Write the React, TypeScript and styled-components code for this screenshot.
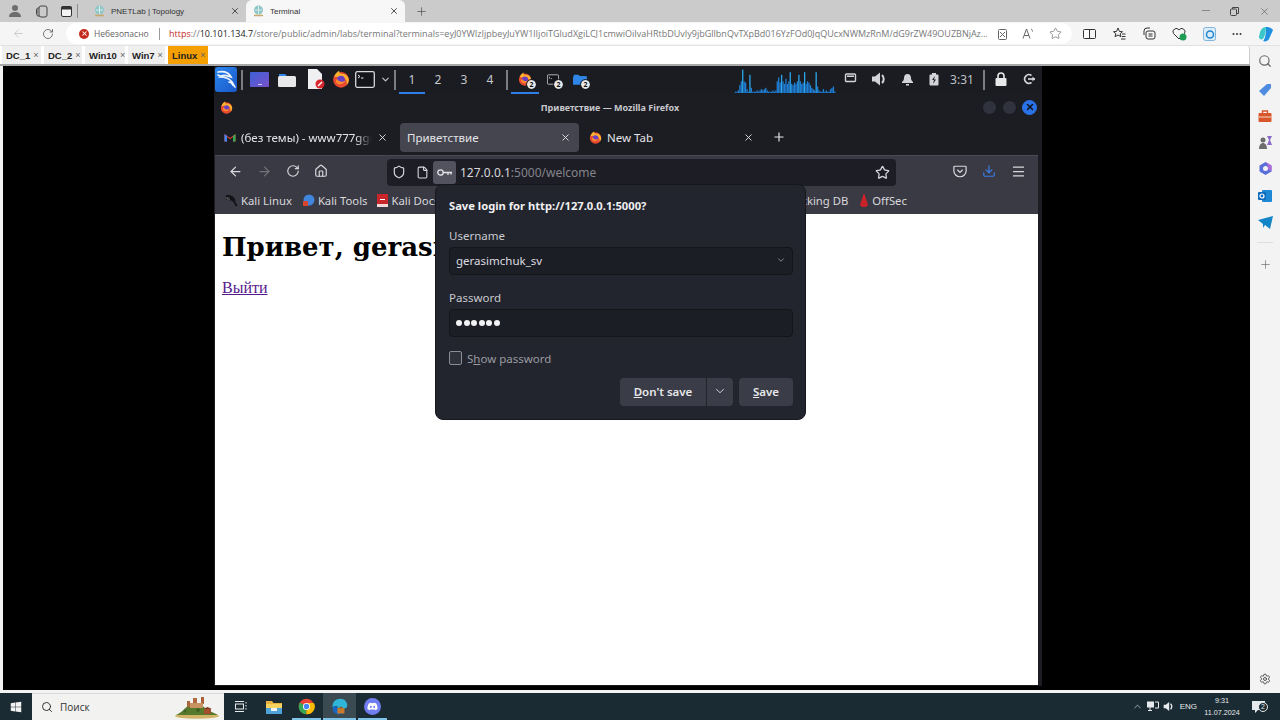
import React from "react";
import styled, { createGlobalStyle } from "styled-components";
import {
  ArrowLeft,
  ArrowRight,
  ChevronDown,
  ChevronUp,
  Download,
  File,
  Home,
  Menu,
  Plus,
  RotateCw,
  Search,
  Settings,
  Shield,
  Star,
  X,
} from "lucide-react";
import { FaDiscord, FaWindows } from "react-icons/fa";

const GlobalStyle = createGlobalStyle`
  html, body {
    margin: 0;
    padding: 0;
    width: 1280px;
    height: 720px;
    overflow: hidden;
    background: #f3f3f3;
  }
  * { box-sizing: border-box; }
`;

const Page = styled.div`
  width: 1280px;
  height: 720px;
  display: flex;
  flex-direction: column;
  overflow: hidden;
  font-family: "Open Sans", "Liberation Sans", sans-serif;
`;

/* edge chrome */

const EdgeTabBar = styled.div`
  height: 22px;
  background: #cbcbcb;
  display: flex;
  align-items: flex-end;
  color: #444;
`;

const EdgeLead = styled.div`
  width: 87px;
  height: 22px;
  display: flex;
  align-items: center;
  padding-left: 8px;
  gap: 13px;
  flex: none;
`;

const EdgeDivider = styled.div`
  width: 1px;
  height: 14px;
  background: #8c8c8c;
  margin-left: -8px;
`;

const EdgeTab = styled.div<{ $active?: boolean }>`
  width: 159px;
  height: 22px;
  display: flex;
  align-items: center;
  padding: 0 6px 0 7px;
  font: 8px "Liberation Sans", sans-serif;
  gap: 6px;
  color: #333;
  background: ${(p) => (p.$active ? "#f7f7f7" : "transparent")};
  border-radius: 6px 6px 0 0;
`;

const TabLabel = styled.span`
  flex: 1;
`;

const NewEdgeTab = styled.div`
  width: 32px;
  height: 22px;
  display: flex;
  align-items: center;
  justify-content: center;
`;

const WindowButtons = styled.div`
  margin-left: auto;
  height: 22px;
  display: flex;
  align-items: center;
  gap: 20px;
  padding-right: 10px;
`;

const EdgeAddressBar = styled.div`
  height: 24px;
  flex: none;
  background: #f5f5f5;
  display: flex;
  align-items: center;
  border-bottom: 1px solid #e2e2e2;
  color: #555;
`;

const NavButtons = styled.div`
  width: 66px;
  display: flex;
  align-items: center;
  padding-left: 12px;
  gap: 17px;
  flex: none;
`;

const AddressPill = styled.div`
  width: 1006px;
  height: 21px;
  background: #fff;
  border-radius: 11px;
  display: flex;
  align-items: center;
  padding-left: 13px;
  font-size: 8.5px;
  flex: none;
`;

const InsecureBadge = styled.span`
  width: 10px;
  height: 10px;
  border-radius: 50%;
  background: #c42b1c;
  color: #fff;
  display: flex;
  align-items: center;
  justify-content: center;
  flex: none;
`;

const InsecureText = styled.span`
  color: #666;
  margin-left: 5px;
  width: 65px;
`;

const UrlDivider = styled.span`
  width: 1px;
  height: 12px;
  background: #999;
  margin-right: 9px;
`;

const UrlScheme = styled.span`
  color: #c42b1c;
`;

const UrlHost = styled.span`
  color: #222;
`;

const UrlRest = styled.span`
  color: #777;
  width: 818px;
  overflow: hidden;
  white-space: nowrap;
  display: inline-flex;
  font-size: 9px;
`;

const PillIcons = styled.div`
  display: flex;
  align-items: center;
  gap: 14px;
  margin-left: 10px;
`;

const EdgeTools = styled.div`
  display: flex;
  align-items: center;
  gap: 16px;
  padding-left: 11px;
`;

const Body = styled.div`
  height: 647px;
  display: flex;
  flex: none;
`;

const Main = styled.div`
  width: 1250px;
  display: flex;
  flex-direction: column;
  flex: none;
`;

/* terminal tabs of the lab */

const TermTabs = styled.div`
  height: 18px;
  background: #fff;
  border-top-right-radius: 3px;
  display: flex;
  align-items: stretch;
  gap: 3px;
  padding-left: 2px;
  border-right: 1px solid #ccc;
`;

const TermTab = styled.div<{ $active?: boolean; $w: number }>`
  width: ${(p) => p.$w}px;
  background: ${(p) => (p.$active ? "#f5a000" : "#efefef")};
  font: bold 9.5px "Liberation Sans", sans-serif;
  color: #222;
  display: flex;
  align-items: center;
  padding-left: 4px;
  white-space: nowrap;
`;

const TermClose = styled.span`
  font-weight: normal;
  color: #666;
  margin-left: 3px;
  font-size: 9px;
`;

const TermRule = styled.div`
  height: 2px;
  background: #a8a8a8;
`;

const Screen = styled.div`
  flex: 1;
  background: #000;
  margin: 0 0 3px 3px;
  padding-left: 211px;
`;

const Desktop = styled.div`
  width: 828px;
  height: 620px;
  background: #16171c;
  display: flex;
  flex-direction: column;
`;

/* kali panel */

const KaliPanel = styled.div`
  height: 28px;
  background: #1a1c21;
  display: flex;
  align-items: center;
  flex: none;
  color: #d4d4d8;
`;

const Slot = styled.div<{ $w: number; $on?: boolean; $ml?: number }>`
  width: ${(p) => p.$w}px;
  height: 28px;
  flex: none;
  margin-left: ${(p) => p.$ml ?? 0}px;
  display: flex;
  align-items: center;
  justify-content: center;
  position: relative;
  font: 12px "Noto Sans", sans-serif;
  color: #c6c8cc;
  border-bottom: 2px solid ${(p) => (p.$on ? "#2f7fe8" : "transparent")};
`;

const PanelDivider = styled.div<{ $l: number; $r: number }>`
  width: 2px;
  height: 20px;
  background: #7b7d82;
  flex: none;
  margin: 0 ${(p) => p.$r}px 0 ${(p) => p.$l}px;
`;

const WinBadge = styled.span`
  position: absolute;
  right: 3px;
  bottom: 3px;
  width: 9px;
  height: 9px;
  border-radius: 50%;
  background: #e8e8e8;
  color: #111;
  font: bold 7px "Noto Sans", sans-serif;
  display: flex;
  align-items: center;
  justify-content: center;
  outline: 1px solid #1a1c21;
`;

const GraphBox = styled.div`
  margin-left: 139px;
  width: 104px;
  height: 28px;
  flex: none;
`;

const Clock = styled.div`
  width: 28px;
  font: 12px "Noto Sans", sans-serif;
  color: #bfc1c6;
  text-align: center;
  flex: none;
  white-space: nowrap;
  padding-bottom: 2px;
`;

/* firefox window */

const Firefox = styled.div`
  position: relative;
  flex: 1;
  display: flex;
  flex-direction: column;
  background: #1c1d23;
  padding: 0 4px 0 1px;
  font-family: "Noto Sans", sans-serif;
`;

const TitleBar = styled.div`
  height: 28px;
  display: flex;
  align-items: center;
  justify-content: space-between;
  padding: 0 1px 2px 5px;
  position: relative;
  flex: none;
`;

const WindowTitle = styled.div`
  position: absolute;
  left: 0;
  width: 790px;
  text-align: center;
  font-size: 9px;
  font-weight: 700;
  color: #c8c9cd;
`;

const TitleButtons = styled.div`
  display: flex;
  gap: 5px;
`;

const TitleDot = styled.div<{ $close?: boolean }>`
  width: 15px;
  height: 15px;
  border-radius: 50%;
  background: ${(p) => (p.$close ? "#2a72e8" : "#30333d")};
  border: 1px solid ${(p) => (p.$close ? "#2a72e8" : "#191a1f")};
  color: #101318;
  display: flex;
  align-items: center;
  justify-content: center;
`;

const TabsRow = styled.div`
  height: 33px;
  display: flex;
  align-items: center;
  padding: 0 0 3px 9px;
  flex: none;
  color: #e4e4e8;
  font-size: 11.5px;
`;

const FfTab = styled.div<{ $w: number; $mr: number; $active?: boolean }>`
  width: ${(p) => p.$w}px;
  height: 29px;
  flex: none;
  display: flex;
  align-items: center;
  padding: 0 8px 0 ${(p) => (p.$active ? 7 : 0)}px;
  gap: 5px;
  border-radius: 4px;
  margin-right: ${(p) => p.$mr}px;
  background: ${(p) => (p.$active ? "#45454f" : "transparent")};
  white-space: nowrap;
  overflow: hidden;
`;

const FadeLabel = styled.span`
  flex: 1;
  overflow: hidden;
  white-space: nowrap;
  -webkit-mask-image: linear-gradient(to right, #000 88%, transparent);
  mask-image: linear-gradient(to right, #000 88%, transparent);
`;

const Toolbar = styled.div`
  height: 31px;
  background: #3a3a44;
  border-top: 1px solid #4a4a54;
  display: flex;
  align-items: center;
  flex: none;
  color: #d8d8dc;
`;

const ToolNav = styled.div`
  width: 172px;
  padding-left: 13px;
  display: flex;
  align-items: center;
  gap: 14px;
  flex: none;
`;

const UrlBar = styled.div`
  width: 509px;
  height: 27px;
  background: #1d1d25;
  border-radius: 4px;
  display: flex;
  align-items: center;
  padding: 0 6px 0 5px;
  flex: none;
  font-size: 12px;
  color: #d8d8dc;
  margin-top: 2px;
`;

const PageIcon = styled(File)`
  margin-left: 10px;
`;

const BookmarkStar = styled(Star)`
  margin-left: auto;
`;

const KeyButton = styled.span`
  width: 23px;
  height: 23px;
  border-radius: 3px;
  background: #53535f;
  display: flex;
  align-items: center;
  justify-content: center;
  margin: 0 4px 0 4px;
  flex: none;
`;

const UrlDim = styled.span`
  color: #84848c;
`;

const ToolRight = styled.div`
  display: flex;
  align-items: center;
  gap: 15px;
  margin-left: 57px;
`;

const Bookmarks = styled.div`
  height: 28px;
  background: #3a3a44;
  display: flex;
  align-items: center;
  padding-left: 10px;
  font-size: 11.3px;
  color: #d8d8dc;
  flex: none;
`;

const Bookmark = styled.div<{ $mr?: number }>`
  display: flex;
  align-items: center;
  gap: 3px;
  margin-right: ${(p) => p.$mr ?? 10}px;
  white-space: nowrap;
`;

const Content = styled.div`
  flex: 1;
  background: #fff;
  padding: 0 7px;
  overflow: hidden;
`;

const Greeting = styled.h1`
  font: bold 26px "DejaVu Serif", serif;
  color: #000;
  margin: 18px 0 14px;
  white-space: nowrap;
`;

const LogoutLink = styled.a`
  font: 16px "Liberation Serif", serif;
  color: #551a8b;
  text-decoration: underline;
`;

const DesktopFoot = styled.div`
  height: 1px;
  background: #16171c;
  flex: none;
`;

/* save login popup */

const SavePopup = styled.div`
  position: absolute;
  left: 221px;
  top: 90px;
  width: 371px;
  height: 236px;
  background: #23252e;
  border-radius: 8px;
  border: 1px solid #17181d;
  padding: 13px 12px 0 13px;
  color: #e8e8ea;
  font-size: 11.5px;
  display: flex;
  flex-direction: column;
`;

const PopupTitle = styled.div`
  font-size: 11.2px;
  font-weight: 700;
  line-height: 16px;
  color: #f0f0f2;
`;

const FieldLabel = styled.div<{ $mt: number }>`
  margin-top: ${(p) => p.$mt}px;
  line-height: 16px;
  color: #c8c9ce;
`;

const FieldBox = styled.div`
  margin-top: 3px;
  height: 28px;
  background: #1c1e26;
  border: 1px solid #14151a;
  border-radius: 4px;
  padding: 0 6px 2px;
  display: flex;
  align-items: center;
  justify-content: space-between;
  color: #dcdce0;
`;

const Dots = styled.div`
  display: flex;
  gap: 1.6px;
  padding-top: 2px;
`;

const Dot = styled.span`
  width: 6px;
  height: 6px;
  border-radius: 50%;
  background: #f2f2f4;
`;

const CheckRow = styled.div`
  margin-top: 13px;
  display: flex;
  align-items: center;
  gap: 5px;
  color: #9a9ba1;
  height: 16px;
`;

const CheckBox = styled.span`
  width: 13px;
  height: 14px;
  border: 1px solid #8b8d94;
  background: #2f313b;
  border-radius: 2px;
`;

const ButtonRow = styled.div`
  margin-top: 12px;
  display: flex;
  justify-content: flex-end;
  gap: 6px;
`;

const SplitButton = styled.div`
  display: flex;
  height: 28px;
  gap: 1px;
`;

const PopupButton = styled.div<{ $w: number; $side?: "l" | "r" }>`
  width: ${(p) => p.$w}px;
  height: 28px;
  padding-bottom: 2px;
  background: #3a3c47;
  border-radius: ${(p) => (p.$side === "l" ? "4px 0 0 4px" : p.$side === "r" ? "0 4px 4px 0" : "4px")};
  font-weight: 600;
  color: #e8e8ea;
  display: flex;
  align-items: center;
  justify-content: center;
`;

const Mnemonic = styled.span`
  text-decoration: underline;
`;

/* edge sidebar */

const Sidebar = styled.div`
  width: 30px;
  flex: none;
  display: flex;
  flex-direction: column;
  align-items: center;
  background: #f3f3f3;
  padding-top: 8px;
  gap: 13px;
  color: #666;
`;

const SideSearch = styled(Search)`
  margin-bottom: 2px;
`;

const SideRule = styled.div`
  width: 16px;
  height: 1px;
  background: #ddd;
  margin-bottom: 2px;
`;

const SideFoot = styled.div`
  margin-top: auto;
  padding-bottom: 8px;
  display: flex;
`;

const SideHexagon = styled.svg`
  margin-top: -2px;
`;

/* windows taskbar */

const Taskbar = styled.div`
  height: 27px;
  flex: none;
  background: #1b2b33;
  display: flex;
  align-items: stretch;
  color: #e6eaec;
`;

const StartButton = styled.div`
  width: 32px;
  display: flex;
  align-items: center;
  justify-content: center;
  flex: none;
`;

const SearchBox = styled.div`
  width: 192px;
  background: #f2f2f0;
  display: flex;
  align-items: center;
  padding: 0 4px 0 9px;
  color: #333;
  font: 10px "Open Sans", sans-serif;
  flex: none;
  justify-content: space-between;
  border-top: 1px solid #d8d8d8;
`;

const SearchLead = styled.div`
  display: flex;
  align-items: center;
  gap: 7px;
`;

const TaskItem = styled.div<{ $on?: boolean; $active?: boolean }>`
  width: 33px;
  flex: none;
  display: flex;
  align-items: center;
  justify-content: center;
  position: relative;
  background: ${(p) => (p.$active ? "#3c4b52" : "transparent")};

  &::after {
    content: "";
    display: ${(p) => (p.$on ? "block" : "none")};
    position: absolute;
    left: ${(p) => (p.$active ? 0 : 2)}px;
    right: ${(p) => (p.$active ? 0 : 2)}px;
    bottom: 0;
    height: 2px;
    background: #7fc4e8;
  }
`;

const DiscordBadge = styled.span`
  width: 17px;
  height: 17px;
  border-radius: 50%;
  background: #6f7df0;
  display: flex;
  align-items: center;
  justify-content: center;
`;

const Tray = styled.div`
  margin-left: auto;
  display: flex;
  align-items: center;
  gap: 4px;
  font: 7.5px "Liberation Sans", sans-serif;
`;

const TrayLang = styled.span`
  margin: 0 3px 0 2px;
  font-size: 8px;
`;

const TrayClock = styled.div`
  width: 36px;
  text-align: center;
  line-height: 12px;
  font-size: 7.2px;
`;

const NotifyBox = styled.div`
  width: 44px;
  margin-left: -8px;
  display: flex;
  align-items: center;
  justify-content: center;
  position: relative;
`;

const NotifyCount = styled.span`
  position: absolute;
  right: 12px;
  bottom: 1px;
  width: 10px;
  height: 10px;
  border-radius: 50%;
  border: 1px solid #e6eaec;
  background: #1b2b33;
  font-size: 7px;
  display: flex;
  align-items: center;
  justify-content: center;
`;

/* drawings */

const FirefoxLogo = ({ size = 16 }: { size?: number }) => (
  <svg width={size} height={size} viewBox="0 0 24 24">
    <circle cx="12" cy="13" r="10.5" fill="#e8492f" />
    <path d="M3 9c1-4 4-7 7-8-1 2 0 3 2 4 5-1 10 3 10.500 8 0 2-1 5-3 7 1-5-1-9-5-10z" fill="#ffb02e" />
    <circle cx="12" cy="13" r="5.200" fill="#6b3fc4" />
    <path d="M7 12c2 4 7 5 11 2-2 5-8 7-12 3-1-2-1-4 1-5z" fill="#ff8a2a" />
  </svg>
);

const GmailLogo = () => (
  <svg width="12" height="10" viewBox="0 0 24 18">
    <path d="M1 18V3l11 8 11-8v15h-5V9l-6 4.500L6 9v9z" fill="#ea4335" />
    <path d="M1 18V3l5 4v11z" fill="#4285f4" />
    <path d="M23 18V3l-5 4v11z" fill="#34a853" />
  </svg>
);

const KaliLogo = () => (
  <svg width="23" height="25" viewBox="0 0 23 25">
    <defs>
      <linearGradient id="kaliBlue" x1="0" y1="0" x2="1" y2="1">
        <stop offset="0" stopColor="#2a86f0" />
        <stop offset="1" stopColor="#1a58c8" />
      </linearGradient>
    </defs>
    <rect x="0" y="0" width="22" height="25" rx="3" fill="url(#kaliBlue)" />
    <path
      d="M3 5c6-1 11 1 13 5-5-2-9-2-11 0 4 0 9 1 12 5 1 2 2 4 3 5M14 15c2 0 3 1 4 3M3 8c1 1 2 1 3 1"
      fill="none"
      stroke="#eef5ff"
      strokeWidth="1.700"
      strokeLinecap="round"
    />
  </svg>
);

const KaliMiniLogo = () => (
  <svg width="13" height="13" viewBox="0 0 23 25">
    <path
      d="M2 4c6-1 11 1 14 6-5-2-9-2-11 0 4 0 9 1 12 5 1 2 2 5 4 7"
      fill="none"
      stroke="#111216"
      strokeWidth="3.400"
      strokeLinecap="round"
    />
    <path d="M3 9c2 1 3 1 5 1" fill="none" stroke="#a8a8ae" strokeWidth="1.500" />
  </svg>
);

const FolderIcon = ({ color = "#e8e8ea", w = 18, h = 15 }: { color?: string; w?: number; h?: number }) => (
  <svg width={w} height={h} viewBox="0 0 18 15">
    <path d="M1 2h6l2 2h8v2H1z" fill="#2f86e6" />
    <rect x="0" y="4" width="18" height="11" rx="1.500" fill={color} />
  </svg>
);

const TerminalIcon = ({ w = 20, h = 17 }: { w?: number; h?: number }) => (
  <svg width={w} height={h} viewBox="0 0 20 17">
    <rect x="0.700" y="0.700" width="18.600" height="15.600" rx="1.500" fill="#14151a" stroke="#d8d8dc" strokeWidth="1.300" />
    <path d="M3 4l2 1.500L3 7M6 7h2.500" fill="none" stroke="#e8e8ea" strokeWidth="1" />
  </svg>
);

const DocIcon = () => (
  <svg width="18" height="20" viewBox="0 0 18 20">
    <path d="M1 0h9l5 5v15H1z" fill="#f0f0f2" />
    <circle cx="13" cy="15" r="4.500" fill="#d8282e" />
    <path d="M11 17l4-4" stroke="#fff" strokeWidth="1.500" />
  </svg>
);

const KeyIcon = () => (
  <svg width="16" height="9" viewBox="0 0 16 9">
    <circle cx="3.500" cy="4.500" r="2.700" fill="none" stroke="#e4e4e8" strokeWidth="1.300" />
    <path d="M6 4.500h9M11 4.500v2.500M14 4.500v2" stroke="#e4e4e8" strokeWidth="1.300" fill="none" />
  </svg>
);

const PocketIcon = () => (
  <svg width="14" height="13" viewBox="0 0 16 14">
    <path
      d="M2 1h12a1 1 0 0 1 1 1v4a7 7 0 0 1-14 0V2a1 1 0 0 1 1-1z"
      fill="none"
      stroke="#d8d8dc"
      strokeWidth="1.400"
    />
    <path d="M5 5l3 3 3-3" fill="none" stroke="#d8d8dc" strokeWidth="1.400" />
  </svg>
);

const EdgeProfile = () => (
  <svg width="14" height="14" viewBox="0 0 14 14">
    <circle cx="7" cy="4" r="3" fill="#6d6d6d" />
    <path d="M1 13c0-3.500 2.500-5 6-5s6 1.500 6 5z" fill="#6d6d6d" />
  </svg>
);

const WorkspacesIcon = () => (
  <svg width="13" height="13" viewBox="0 0 13 13" fill="none" stroke="#444" strokeWidth="1">
    <rect x="4" y="1" width="8" height="11" rx="2" />
    <path d="M4 3H3a1 1 0 0 0-1 1v6a1 1 0 0 0 1 1h1M2 4.500H1.500v4H2" />
  </svg>
);

const TabsViewIcon = () => (
  <svg width="11" height="11" viewBox="0 0 11 11">
    <rect x="0.500" y="0.500" width="10" height="10" rx="1.500" fill="#f4f4f4" stroke="#333" />
    <rect x="0.500" y="0.500" width="10" height="3" fill="#333" />
  </svg>
);

const GlobeFavicon = () => (
  <svg width="11" height="12" viewBox="0 0 11 12">
    <circle cx="5.500" cy="5" r="4.500" fill="#8fc7c9" />
    <path d="M2 5h7M5.500 1v8" stroke="#e8f4f4" strokeWidth="0.800" />
    <path d="M1 10.500h9" stroke="#c7a76a" strokeWidth="1.500" />
  </svg>
);

const ChromeLogo = () => (
  <svg width="17" height="17" viewBox="0 0 24 24">
    <circle cx="12" cy="12" r="11" fill="#ea4335" />
    <path d="M12 12L2.500 6.500A11 11 0 0 0 12 23z" fill="#34a853" />
    <path d="M12 7h10.500A11 11 0 0 1 12 23z" fill="#fbbc05" />
    <circle cx="12" cy="12" r="5" fill="#fff" />
    <circle cx="12" cy="12" r="3.800" fill="#4285f4" />
  </svg>
);

const EdgeLogo = ({ size = 17 }: { size?: number }) => (
  <svg width={size} height={size} viewBox="0 0 24 24">
    <path d="M2 13C2 5 7 1 13 1c6 0 10 4 10 10 0 3-3 4-6 4h-7c0-4-2-5-8-2z" fill="#2fb5d8" />
    <path d="M2 13c6-3 8-1 8 2 0 3 2 6 6 7-2 1-3 1-5 1C6 23 2 19 2 13z" fill="#1668c4" />
    <rect x="9" y="14" width="10" height="8" rx="1" fill="#c77a2c" />
    <rect x="12" y="12.500" width="4" height="2" fill="#8a5216" />
  </svg>
);

const ExplorerIcon = () => (
  <svg width="16" height="14" viewBox="0 0 16 14">
    <path d="M0 1h6l1.500 2H16v3H0z" fill="#e8b03c" />
    <rect x="0" y="4" width="16" height="10" fill="#f7d25e" />
    <rect x="0" y="8" width="16" height="6" fill="#4fa3d8" />
    <rect x="5" y="8" width="6" height="3" fill="#f2f2f2" />
  </svg>
);

const Landscape = () => (
  <svg width="46" height="24" viewBox="0 0 46 24">
    <ellipse cx="23" cy="21" rx="22" ry="2.800" fill="#d2b468" />
    <path d="M2 20c6-2 9-8 15-11 7-3 12 2 16 6 4 2 8 3 11 5z" fill="#56792c" />
    <rect x="13" y="6" width="3" height="6" fill="#a9683e" />
    <rect x="19" y="3" width="4" height="6" fill="#b06a42" />
    <rect x="27" y="2" width="3" height="7" fill="#a85f3a" />
    <rect x="16" y="8" width="13" height="5" fill="#c99261" />
    <rect x="30" y="14" width="7" height="5" fill="#a44e30" />
    <path d="M29 14l4.500-2 4.500 2z" fill="#7f3a22" />
    <circle cx="24" cy="15" r="2" fill="#3f6322" />
    <circle cx="11" cy="16" r="1.500" fill="#3f6322" />
  </svg>
);

const SpeakerGlyph = ({ size = 16, color = "#d4d4d8" }: { size?: number; color?: string }) => (
  <svg width={size} height={size} viewBox="0 0 16 16">
    <path d="M1 5.500h3L9 1.500v13l-5-4H1z" fill={color} />
    <path d="M11 4a5.500 5.500 0 0 1 0 8" fill="none" stroke={color} strokeWidth="2" />
  </svg>
);

const NetworkGlyph = () => (
  <svg width="13" height="12" viewBox="0 0 13 12">
    <rect x="1.500" y="1" width="10" height="7.500" rx="1" fill="none" stroke="#d4d4d8" strokeWidth="1.400" />
    <rect x="3" y="2.500" width="7" height="1.500" fill="#d4d4d8" />
  </svg>
);

const BellGlyph = () => (
  <svg width="13" height="13" viewBox="0 0 13 13">
    <path d="M6.500 1c2.500 0 3.500 2 3.500 4 0 2 1 3 2 4v1H1V9c1-1 2-2 2-4s1-4 3.500-4z" fill="#d4d4d8" />
    <rect x="5" y="11" width="3" height="1.500" fill="#d4d4d8" />
  </svg>
);

const BatteryGlyph = () => (
  <svg width="10" height="13" viewBox="0 0 10 13">
    <rect x="3" y="0" width="4" height="2" fill="#d4d4d8" />
    <rect x="0.500" y="1.500" width="9" height="11" rx="1" fill="#d4d4d8" />
    <path d="M6 3L3 7h2l-1 4 3-4.500H5z" fill="#1a1c21" />
  </svg>
);

const LockGlyph = () => (
  <svg width="12" height="14" viewBox="0 0 12 14">
    <path d="M3 6V4a3 3 0 0 1 6 0v2" fill="none" stroke="#e8e8ea" strokeWidth="1.600" />
    <rect x="0.500" y="6" width="11" height="8" rx="1" fill="#e8e8ea" />
  </svg>
);

const LogoutGlyph = () => (
  <svg width="13" height="12" viewBox="0 0 13 12" fill="none" stroke="#d8d8dc" strokeWidth="1.600">
    <path d="M8.500 2.500A4.300 4.300 0 1 0 8.500 9.500" />
    <path d="M5 6h7" />
    <path d="M9.500 3.500L12 6 9.500 8.500z" fill="#d8d8dc" stroke="none" />
  </svg>
);

const SmallBookmarkIcon = () => (
  <svg width="13" height="13" viewBox="0 0 13 13">
    <circle cx="6.500" cy="6.500" r="5.500" fill="#55555f" />
  </svg>
);

const graphBars = [
  0, 0, 1, 1, 2, 6, 9, 18, 9, 8, 3, 1, 14, 4, 1, 1, 1, 2, 1, 2, 3, 2, 3, 4, 2, 1, 1, 1, 2, 1, 2, 9, 12, 8, 14, 9, 7, 11, 7,
  9, 16, 7, 6, 8, 7, 9, 14, 9, 7, 8, 16, 7, 9, 8, 6, 4, 3, 2, 16, 5, 2, 1, 1, 3, 1, 2, 1, 1, 3, 4, 5, 1,
];

const CpuGraph = () => (
  <svg width="104" height="28" viewBox="0 0 104 28">
    {graphBars.map((h, i) => (
      <rect key={i} x={i * 1.44} y={27 - h * 1.3} width="1.3" height={h * 1.3} fill={h > 12 ? "#2ba7ee" : "#1f7fd6"} />
    ))}
  </svg>
);

const termTabs = [
  { name: "DC_1", w: 39 },
  { name: "DC_2", w: 38 },
  { name: "Win10", w: 40 },
  { name: "Win7", w: 37 },
  { name: "Linux", w: 40, active: true },
];

export default function App() {
  return (
    <Page>
      <GlobalStyle />
      <EdgeTabBar>
        <EdgeLead>
          <EdgeProfile />
          <WorkspacesIcon />
          <TabsViewIcon />
          <EdgeDivider />
        </EdgeLead>
        <EdgeTab>
          <GlobeFavicon />
          <TabLabel>PNETLab | Topology</TabLabel>
          <X size={10} />
        </EdgeTab>
        <EdgeTab $active>
          <GlobeFavicon />
          <TabLabel>Terminal</TabLabel>
          <X size={10} />
        </EdgeTab>
        <NewEdgeTab>
          <Plus size={13} strokeWidth={1.2} />
        </NewEdgeTab>
        <WindowButtons>
          <svg width="8" height="2" viewBox="0 0 8 2">
            <rect width="8" height="1" fill="#888" />
          </svg>
          <svg width="9" height="9" viewBox="0 0 9 9" fill="none" stroke="#444">
            <rect x="0.500" y="2" width="6" height="6.500" rx="1" />
            <path d="M2.500 2V0.500h6V6.500H7" />
          </svg>
          <X size={11} strokeWidth={1.2} />
        </WindowButtons>
      </EdgeTabBar>

      <EdgeAddressBar>
        <NavButtons>
          <ArrowLeft size={13} color="#bbb" strokeWidth={1.3} />
          <RotateCw size={12} color="#444" strokeWidth={1.4} />
        </NavButtons>
        <AddressPill>
          <InsecureBadge>
            <X size={7} strokeWidth={3.5} />
          </InsecureBadge>
          <InsecureText>Небезопасно</InsecureText>
          <UrlDivider />
          <UrlRest>
            <UrlScheme>https</UrlScheme>
            ://
            <UrlHost>10.101.134.7</UrlHost>
            /store/public/admin/labs/terminal?terminals=eyJ0YWIzIjpbeyJuYW1lIjoiTGludXgiLCJ1cmwiOiIvaHRtbDUvIy9jbGllbnQvTXpBd016YzFOd0JqQUcxNWMzRnM/dG9rZW49OUZBNjAz...
          </UrlRest>
          <PillIcons>
            <svg width="11" height="12" viewBox="0 0 11 12" fill="none" stroke="#666">
              <rect x="1.500" y="1.500" width="8" height="10" rx="1" />
              <path d="M3 1.500h5M3 4l5 5M8 4L3 9" />
            </svg>
            <svg width="13" height="11" viewBox="0 0 13 11" fill="none" stroke="#666">
              <path d="M1 10.500L4.500 1 8 10.500M2.300 7.500h4.500M9 1c1 .5 1.500 1.500 1.500 2.500" />
            </svg>
            <Star size={13} strokeWidth={1.1} />
          </PillIcons>
        </AddressPill>
        <EdgeTools>
          <svg width="13" height="12" viewBox="0 0 13 12" fill="none" stroke="#333">
            <rect x="0.500" y="1.500" width="12" height="9" rx="1" />
            <path d="M6.500 1.500v9" />
            <rect x="1" y="2" width="5" height="8" fill="#fff" stroke="none" />
          </svg>
          <svg width="14" height="13" viewBox="0 0 14 13" fill="none" stroke="#333">
            <path d="M6 1l1.500 3.500 3 .2-2.300 2 .8 3-3-1.700-3 1.700.8-3L1.500 4.700l3-.2z" />
            <path d="M10 7h3.500M10 9.500h3.500M9 12h4.500" />
          </svg>
          <svg width="14" height="13" viewBox="0 0 14 13" fill="none" stroke="#333">
            <path d="M2 8V4a3 3 0 0 1 3-3h3" />
            <rect x="4" y="4" width="9" height="8" rx="2" />
            <path d="M6.500 7h4M6.500 9h4" />
          </svg>
          <svg width="15" height="14" viewBox="0 0 15 14">
            <path d="M7 12L1.500 6.500A3 3 0 0 1 7 3a3 3 0 0 1 5.500 3.500z" fill="none" stroke="#333" />
            <circle cx="11" cy="10" r="3.500" fill="#1f9d55" />
          </svg>
          <svg width="13" height="14" viewBox="0 0 13 14">
            <rect x="0.500" y="0.500" width="12" height="13" rx="2" fill="#dcecf8" stroke="#7fb4dc" />
            <circle cx="7" cy="7.500" r="3.500" fill="none" stroke="#1e88d4" strokeWidth="1.500" />
          </svg>
          <svg width="10" height="4" viewBox="0 0 10 4">
            <circle cx="1.500" cy="2" r="1" fill="#333" />
            <circle cx="5" cy="2" r="1" fill="#333" />
            <circle cx="8.500" cy="2" r="1" fill="#333" />
          </svg>
          <svg width="16" height="16" viewBox="0 0 16 16">
            <path d="M8 1c3 0 6 1 7 3l-4 9c-1 2-4 3-6 2 2-2 3-6 3-14z" fill="#1f8fe0" />
            <path d="M8 1C5 1 3 3 2 6L1 11c0 2 2 3 4 2 2-3 3-8 3-12z" fill="#3cc8c8" />
          </svg>
        </EdgeTools>
      </EdgeAddressBar>

      <Body>
        <Main>
          <TermTabs>
            {termTabs.map((t) => (
              <TermTab key={t.name} $w={t.w} $active={t.active}>
                {t.name}
                <TermClose>×</TermClose>
              </TermTab>
            ))}
          </TermTabs>
          <TermRule />
          <Screen>
            <Desktop>
              <KaliPanel>
                <Slot $w={24}>
                  <KaliLogo />
                </Slot>
                <PanelDivider $l={3} $r={3} />
                <Slot $w={26}>
                  <svg width="19" height="15" viewBox="0 0 19 15">
                    <defs>
                      <linearGradient id="deskPurple" x1="0" y1="0" x2="1" y2="1">
                        <stop offset="0" stopColor="#3d62d8" />
                        <stop offset="1" stopColor="#7a50c8" />
                      </linearGradient>
                    </defs>
                    <rect width="19" height="15" rx="1" fill="url(#deskPurple)" />
                    <rect x="8" y="12" width="4" height="1" fill="#c8ccf0" />
                  </svg>
                </Slot>
                <Slot $w={30}>
                  <FolderIcon />
                </Slot>
                <Slot $w={27}>
                  <DocIcon />
                </Slot>
                <Slot $w={24}>
                  <FirefoxLogo size={18} />
                </Slot>
                <Slot $w={24}>
                  <TerminalIcon />
                </Slot>
                <Slot $w={16}>
                  <ChevronDown size={11} strokeWidth={2.4} />
                </Slot>
                <PanelDivider $l={1} $r={3} />
                <Slot $w={26} $on>
                  1
                </Slot>
                <Slot $w={26}>2</Slot>
                <Slot $w={26}>3</Slot>
                <Slot $w={26}>4</Slot>
                <PanelDivider $l={3} $r={3} />
                <Slot $w={28} $on>
                  <FirefoxLogo size={14} />
                  <WinBadge>2</WinBadge>
                </Slot>
                <Slot $w={27}>
                  <TerminalIcon w={12} h={11} />
                  <WinBadge>2</WinBadge>
                </Slot>
                <Slot $w={27}>
                  <FolderIcon color="#2f86e6" w={14} h={12} />
                  <WinBadge>2</WinBadge>
                </Slot>
                <GraphBox>
                  <CpuGraph />
                </GraphBox>
                <Slot $w={28}>
                  <NetworkGlyph />
                </Slot>
                <Slot $w={30}>
                  <SpeakerGlyph />
                </Slot>
                <Slot $w={26}>
                  <BellGlyph />
                </Slot>
                <Slot $w={28}>
                  <BatteryGlyph />
                </Slot>
                <Clock>3:31</Clock>
                <PanelDivider $l={7} $r={5} />
                <Slot $w={22}>
                  <LockGlyph />
                </Slot>
                <Slot $w={26} $ml={4}>
                  <LogoutGlyph />
                </Slot>
              </KaliPanel>

              <Firefox>
                <TitleBar>
                  <FirefoxLogo size={13} />
                  <WindowTitle>Приветствие — Mozilla Firefox</WindowTitle>
                  <TitleButtons>
                    <TitleDot />
                    <TitleDot />
                    <TitleDot $close>
                      <X size={10} strokeWidth={3.5} />
                    </TitleDot>
                  </TitleButtons>
                </TitleBar>
                <TabsRow>
                  <FfTab $w={172} $mr={4}>
                    <GmailLogo />
                    <FadeLabel>(без темы) - www777gggg@gmail.com</FadeLabel>
                    <X size={11} />
                  </FfTab>
                  <FfTab $w={179} $mr={10} $active>
                    <TabLabel>Приветствие</TabLabel>
                    <X size={11} />
                  </FfTab>
                  <FfTab $w={173} $mr={10}>
                    <FirefoxLogo size={13} />
                    <TabLabel>New Tab</TabLabel>
                    <X size={11} />
                  </FfTab>
                  <Plus size={14} />
                </TabsRow>
                <Toolbar>
                  <ToolNav>
                    <ArrowLeft size={15} />
                    <ArrowRight size={15} color="#72727a" />
                    <RotateCw size={14} />
                    <Home size={14} />
                  </ToolNav>
                  <UrlBar>
                    <Shield size={14} />
                    <PageIcon size={13} />
                    <KeyButton>
                      <KeyIcon />
                    </KeyButton>
                    127.0.0.1<UrlDim>:5000/welcome</UrlDim>
                    <BookmarkStar size={15} />
                  </UrlBar>
                  <ToolRight>
                    <PocketIcon />
                    <Download size={14} color="#3b7fe8" />
                    <Menu size={15} />
                  </ToolRight>
                </Toolbar>
                <Bookmarks>
                  <Bookmark>
                    <KaliMiniLogo />
                    Kali Linux
                  </Bookmark>
                  <Bookmark>
                    <svg width="13" height="13" viewBox="0 0 13 13">
                      <circle cx="7" cy="6" r="5.500" fill="#3f86dc" />
                      <rect x="1" y="7" width="5" height="5" fill="#d8452f" />
                    </svg>
                    Kali Tools
                  </Bookmark>
                  <Bookmark>
                    <svg width="11" height="13" viewBox="0 0 11 13">
                      <rect width="11" height="13" fill="#c9262c" />
                      <rect y="10" width="11" height="3" fill="#f2d8d8" />
                      <path d="M3 5.500h5" stroke="#fff" />
                    </svg>
                    Kali Docs
                  </Bookmark>
                  <Bookmark>
                    <SmallBookmarkIcon />
                    Kali Forums
                  </Bookmark>
                  <Bookmark>
                    <SmallBookmarkIcon />
                    Kali NetHunter
                  </Bookmark>
                  <Bookmark $mr={32}>
                    <SmallBookmarkIcon />
                    Exploit-DB
                  </Bookmark>
                  <Bookmark $mr={11}>Google Hacking DB</Bookmark>
                  <Bookmark>
                    <svg width="10" height="14" viewBox="0 0 10 14">
                      <path d="M5 0c1 3 3 8 4 12l-2 2H3l-2-2C2 8 4 3 5 0z" fill="#c8232a" />
                    </svg>
                    OffSec
                  </Bookmark>
                </Bookmarks>
                <Content>
                  <Greeting>Привет, gerasimchuk_sv!</Greeting>
                  <LogoutLink href="#">Выйти</LogoutLink>
                </Content>
                <DesktopFoot />

                <SavePopup>
                  <PopupTitle>Save login for http://127.0.0.1:5000?</PopupTitle>
                  <FieldLabel $mt={14}>Username</FieldLabel>
                  <FieldBox>
                    gerasimchuk_sv
                    <ChevronDown size={10} color="#9a9ba1" />
                  </FieldBox>
                  <FieldLabel $mt={15}>Password</FieldLabel>
                  <FieldBox>
                    <Dots>
                      <Dot />
                      <Dot />
                      <Dot />
                      <Dot />
                      <Dot />
                      <Dot />
                    </Dots>
                  </FieldBox>
                  <CheckRow>
                    <CheckBox />
                    <span>
                      S<Mnemonic>h</Mnemonic>ow password
                    </span>
                  </CheckRow>
                  <ButtonRow>
                    <SplitButton>
                      <PopupButton $w={86} $side="l">
                        <span>
                          <Mnemonic>D</Mnemonic>on't save
                        </span>
                      </PopupButton>
                      <PopupButton $w={26} $side="r">
                        <ChevronDown size={14} strokeWidth={1.5} />
                      </PopupButton>
                    </SplitButton>
                    <PopupButton $w={54}>
                      <span>
                        <Mnemonic>S</Mnemonic>ave
                      </span>
                    </PopupButton>
                  </ButtonRow>
                </SavePopup>
              </Firefox>
            </Desktop>
          </Screen>
        </Main>
        <Sidebar>
          <SideSearch size={14} color="#666" />
          <svg width="14" height="14" viewBox="0 0 14 14">
            <path d="M9 1h4v4l-7 8-5-5z" fill="#4f8be0" />
          </svg>
          <svg width="14" height="12" viewBox="0 0 14 12">
            <rect x="0.500" y="3" width="13" height="9" rx="1" fill="#d9562a" />
            <path d="M4.500 3V1h5v2" fill="none" stroke="#d9562a" strokeWidth="1.400" />
            <rect x="0.500" y="6.500" width="13" height="1" fill="#f4d8c8" />
          </svg>
          <svg width="15" height="15" viewBox="0 0 15 15">
            <circle cx="5" cy="5" r="2.500" fill="#6d6d6d" />
            <path d="M1 14c0-4 2-6 4-6s4 2 4 6z" fill="#6d6d6d" />
            <path d="M9 1h5L12 5l2 5H9l2-5z" fill="#8a6cc8" />
          </svg>
          <SideHexagon width="15" height="15" viewBox="0 0 15 15">
            <path d="M7.500 1l6 3.500v6L7.500 14l-6-3.500v-6z" fill="#5a6fd8" />
            <path d="M7.500 1l6 3.500v6L10 8V5z" fill="#b06ad8" />
            <circle cx="7.500" cy="7.500" r="2.500" fill="#f3f3f3" />
          </SideHexagon>
          <svg width="14" height="14" viewBox="0 0 14 14">
            <rect x="4" y="1" width="10" height="12" rx="1" fill="#1e88d4" />
            <rect x="0" y="3" width="8" height="8" rx="1" fill="#0f6cbd" />
            <circle cx="4" cy="7" r="2" fill="none" stroke="#fff" strokeWidth="1.200" />
          </svg>
          <svg width="15" height="13" viewBox="0 0 15 13">
            <path d="M0 4L15 0l-3 13-5-4-2 3V8z" fill="#1486c8" />
          </svg>
          <SideRule />
          <Plus size={13} color="#666" strokeWidth={1.2} />
          <SideFoot>
            <Settings size={12} color="#555" />
          </SideFoot>
        </Sidebar>
      </Body>

      <Taskbar>
        <StartButton>
          <FaWindows size={12} color="#f2f2f2" />
        </StartButton>
        <SearchBox>
          <SearchLead>
            <Search size={12} color="#333" />
            Поиск
          </SearchLead>
          <Landscape />
        </SearchBox>
        <TaskItem>
          <svg width="12" height="11" viewBox="0 0 12 11" fill="none" stroke="#e6eaec">
            <rect x="0.500" y="3" width="8" height="5" />
            <path d="M0 0.500h9M0 10.500h9M11 1v1.500M11 4v1.500M11 7v1.500" />
          </svg>
        </TaskItem>
        <TaskItem>
          <ExplorerIcon />
        </TaskItem>
        <TaskItem $on>
          <ChromeLogo />
        </TaskItem>
        <TaskItem $on $active>
          <EdgeLogo />
        </TaskItem>
        <TaskItem $on>
          <DiscordBadge>
            <FaDiscord size={11} color="#fff" />
          </DiscordBadge>
        </TaskItem>
        <Tray>
          <ChevronUp size={11} strokeWidth={1.4} />
          <svg width="12" height="11" viewBox="0 0 12 11" fill="none" stroke="#e6eaec">
            <rect x="0.500" y="1" width="6" height="5" fill="#e6eaec" />
            <path d="M3 6v3M1 9.500h4M8 1h3.500v6H8" />
          </svg>
          <SpeakerGlyph size={11} color="#e6eaec" />
          <TrayLang>ENG</TrayLang>
          <TrayClock>
            9:31
            <br />
            11.07.2024
          </TrayClock>
          <NotifyBox>
            <svg width="13" height="12" viewBox="0 0 13 12">
              <path d="M0 0h13v9H6l-3 3V9H0z" fill="#e6eaec" />
            </svg>
            <NotifyCount>2</NotifyCount>
          </NotifyBox>
        </Tray>
      </Taskbar>
    </Page>
  );
}
